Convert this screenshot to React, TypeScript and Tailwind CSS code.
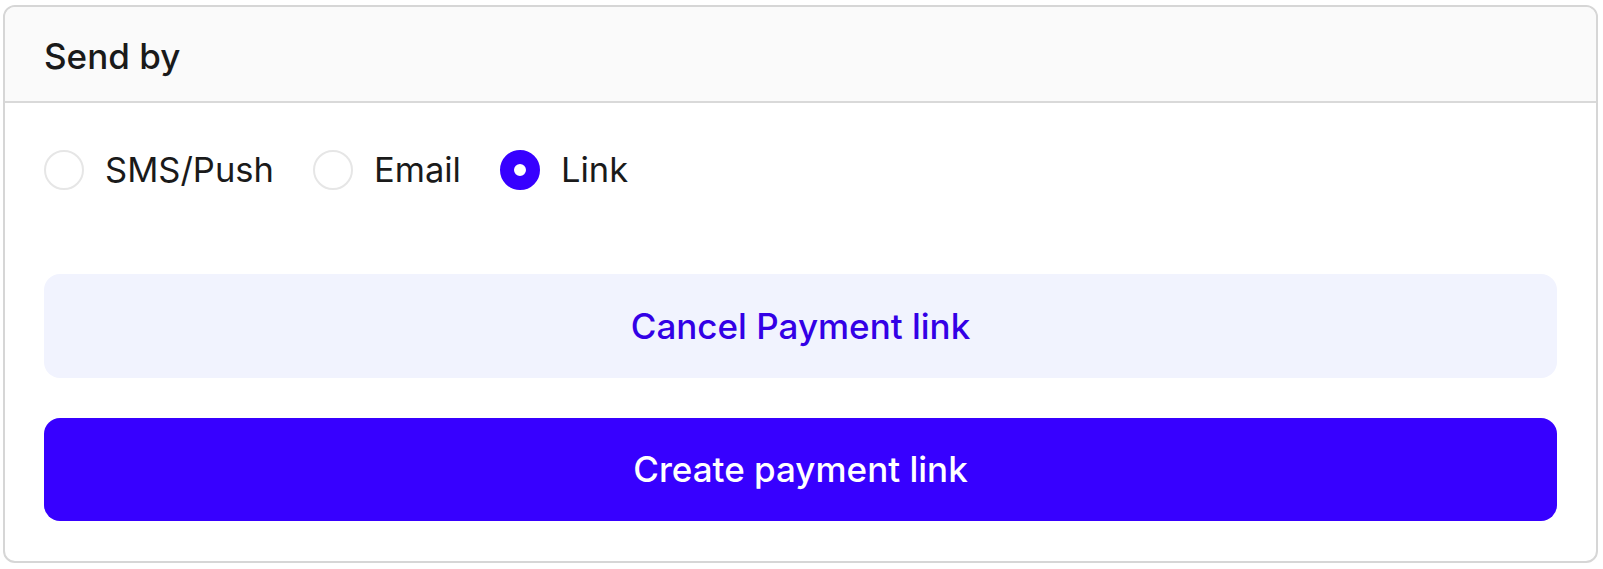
const OPTIONS = [
  { id: "sms", label: "SMS/Push" },
  { id: "email", label: "Email" },
  { id: "link", label: "Link" },
];

function Radio({ label, checked }: { label: string; checked: boolean }) {
  return (
    <label className="flex items-center gap-[21px]">
      {checked ? (
        <span className="box-border h-[40px] w-[40px] rounded-full border-[14px] border-[#3700ff] bg-white" />
      ) : (
        <span className="box-border h-[40px] w-[40px] rounded-full border-2 border-[#e6e6e6] bg-white" />
      )}
      <span className="text-[34.5px] leading-none text-[#1a1a1a]">{label}</span>
    </label>
  );
}

export default function App() {
  const selected = "link";
  return (
    <div
      className="min-h-[569px] bg-white pl-[3px] pt-[5px]"
      style={{ fontFamily: "Inter, 'Liberation Sans', sans-serif" }}
    >
      <div className="w-[1595px] overflow-hidden rounded-[12px] border-2 border-[#d6d6d6] bg-white">
        {/* header */}
        <div className="flex h-[96px] items-center border-b-2 border-[#d9d9d9] bg-[#fafafa] px-[39px] pt-[4px]">
          <h2 className="text-[35px] font-medium text-[#1a1a1a]">Send by</h2>
        </div>

        <div className="px-[39px] pb-[40px] pt-[47px]">
          <div className="flex h-[40px] items-center gap-[39px]">
            {OPTIONS.map((o) => (
              <Radio key={o.id} label={o.label} checked={o.id === selected} />
            ))}
          </div>

          <div className="mt-[84px] flex flex-col gap-[40px]">
            <button className="h-[104px] w-full rounded-[16px] bg-[#f1f3fe] text-[35px] font-medium text-[#3300e6]">
              Cancel Payment link
            </button>
            <button className="h-[103px] w-full rounded-[16px] bg-[#3700ff] text-[35px] font-medium text-white">
              Create payment link
            </button>
          </div>
        </div>
      </div>
    </div>
  );
}
